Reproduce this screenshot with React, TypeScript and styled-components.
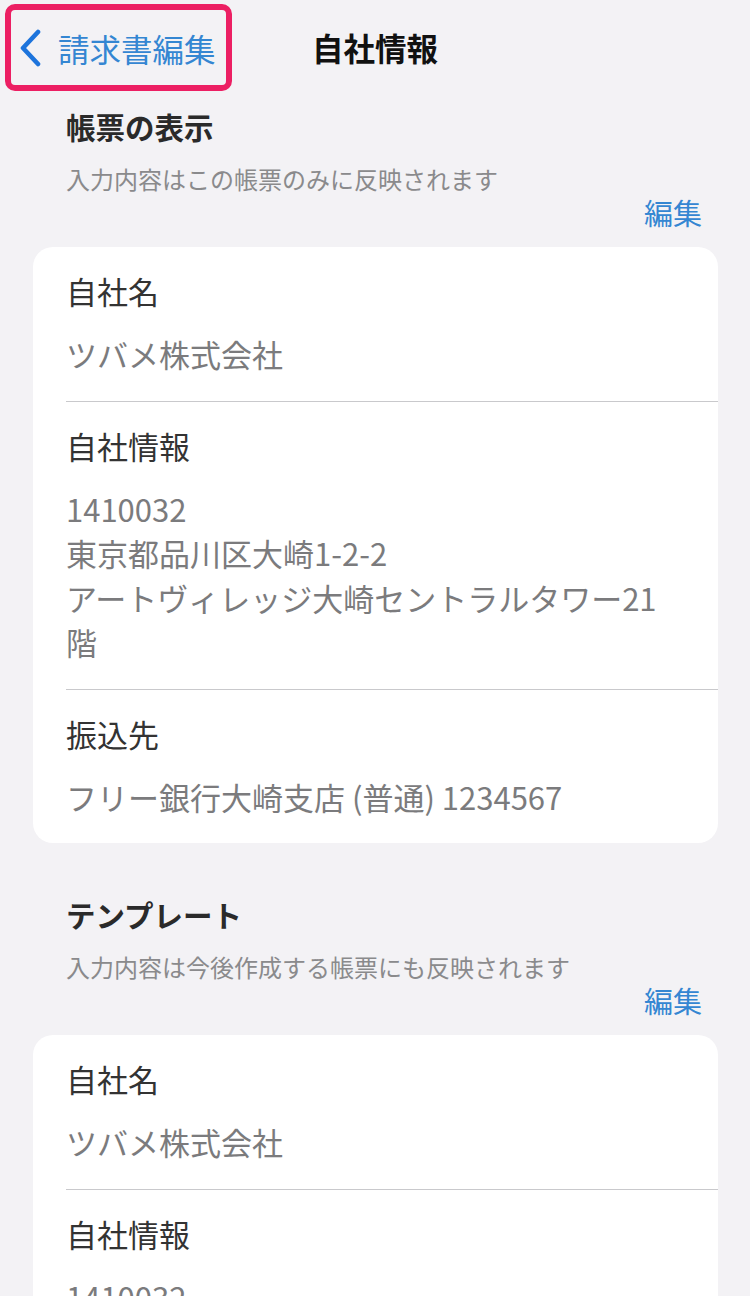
import React from "react";
import styled, { createGlobalStyle } from "styled-components";

const GlobalStyle = createGlobalStyle`
  html, body {
    margin: 0;
    padding: 0;
    background: #f3f2f5;
  }
  body {
    font-family: "Noto Sans CJK JP", "Noto Sans", sans-serif;
    -webkit-font-smoothing: antialiased;
  }
`;

const Page = styled.div`
  width: 750px;
  height: 1296px;
  overflow: hidden;
  background: #f3f2f5;
  display: flex;
  flex-direction: column;
`;

const Header = styled.header`
  display: grid;
  grid-template-columns: 1fr auto 1fr;
  align-items: start;
  padding: 4px 0 0 5px;
  height: 87px;
  flex-shrink: 0;
`;

const BackBox = styled.div`
  justify-self: start;
  width: 227px;
  height: 87px;
  box-sizing: border-box;
  border: 6px solid #ec1f63;
  border-radius: 10px;
  display: flex;
  align-items: center;
  padding-left: 9px;
  gap: 16px;
`;

const BackText = styled.span`
  font-size: 31.5px;
  line-height: 40px;
  color: #3486d2;
`;

const Title = styled.h1`
  margin: 0;
  font-size: 31.5px;
  font-weight: 700;
  line-height: 40px;
  color: #111;
  margin-top: 23px;
  margin-left: -5px;
`;

const Section = styled.section<{ $first?: boolean }>`
  display: flex;
  flex-direction: column;
  flex-shrink: 0;
  margin-top: ${(p) => (p.$first ? "15px" : "51px")};
`;

const SectionHead = styled.div`
  display: flex;
  flex-direction: column;
  padding: 0 48px 0 66px;
`;

const SectionTitle = styled.h2`
  margin: 0;
  font-size: 29.5px;
  font-weight: 700;
  line-height: 40px;
  color: #2a2a2a;
`;

const SectionNote = styled.p`
  margin: 18px 0 0;
  font-size: 24px;
  line-height: 30px;
  color: #8a8a8c;
`;

const EditLink = styled.span`
  align-self: flex-end;
  margin-top: 1px;
  font-size: 29px;
  line-height: 34px;
  color: #3486d2;
`;

const Card = styled.div`
  margin: 18px 32px 0 33px;
  background: #ffffff;
  border-radius: 20px;
  overflow: hidden;
`;

const Row = styled.div`
  margin-left: 33px;
  padding: 23px 40px 24px 0;
  display: flex;
  flex-direction: column;
  gap: 20px;
  & + & {
    border-top: 1px solid #c9c9cc;
  }
`;

const Label = styled.div`
  font-size: 31px;
  line-height: 42px;
  color: #333;
`;

const Value = styled.div`
  font-size: 31px;
  line-height: 44.5px;
  color: #7b7b7d;
  white-space: pre-line;
`;

const Chevron = () => (
  <svg width="22" height="38" viewBox="0 0 22 38" fill="none">
    <path
      d="M18 3 L3 19 L18 35"
      stroke="#1d74dc"
      strokeWidth="4.6"
      strokeLinecap="round"
      strokeLinejoin="round"
    />
  </svg>
);

type Item = { label: string; value: string };

const items: Item[] = [
  { label: "自社名", value: "ツバメ株式会社" },
  {
    label: "自社情報",
    value: "1410032\n東京都品川区大崎1-2-2\nアートヴィレッジ大崎セントラルタワー21階",
  },
  { label: "振込先", value: "フリー銀行大崎支店 (普通) 1234567" },
];

const InfoSection: React.FC<{ title: string; note: string; first?: boolean }> = ({
  title,
  note,
  first,
}) => (
  <Section $first={first}>
    <SectionHead>
      <SectionTitle>{title}</SectionTitle>
      <SectionNote>{note}</SectionNote>
      <EditLink>編集</EditLink>
    </SectionHead>
    <Card>
      {items.map((it) => (
        <Row key={it.label}>
          <Label>{it.label}</Label>
          <Value>{it.value}</Value>
        </Row>
      ))}
    </Card>
  </Section>
);

export default function App() {
  return (
    <>
      <GlobalStyle />
      <Page>
        <Header>
          <BackBox>
            <Chevron />
            <BackText>請求書編集</BackText>
          </BackBox>
          <Title>自社情報</Title>
          <div />
        </Header>
        <InfoSection
          first
          title="帳票の表示"
          note="入力内容はこの帳票のみに反映されます"
        />
        <InfoSection
          title="テンプレート"
          note="入力内容は今後作成する帳票にも反映されます"
        />
      </Page>
    </>
  );
}
